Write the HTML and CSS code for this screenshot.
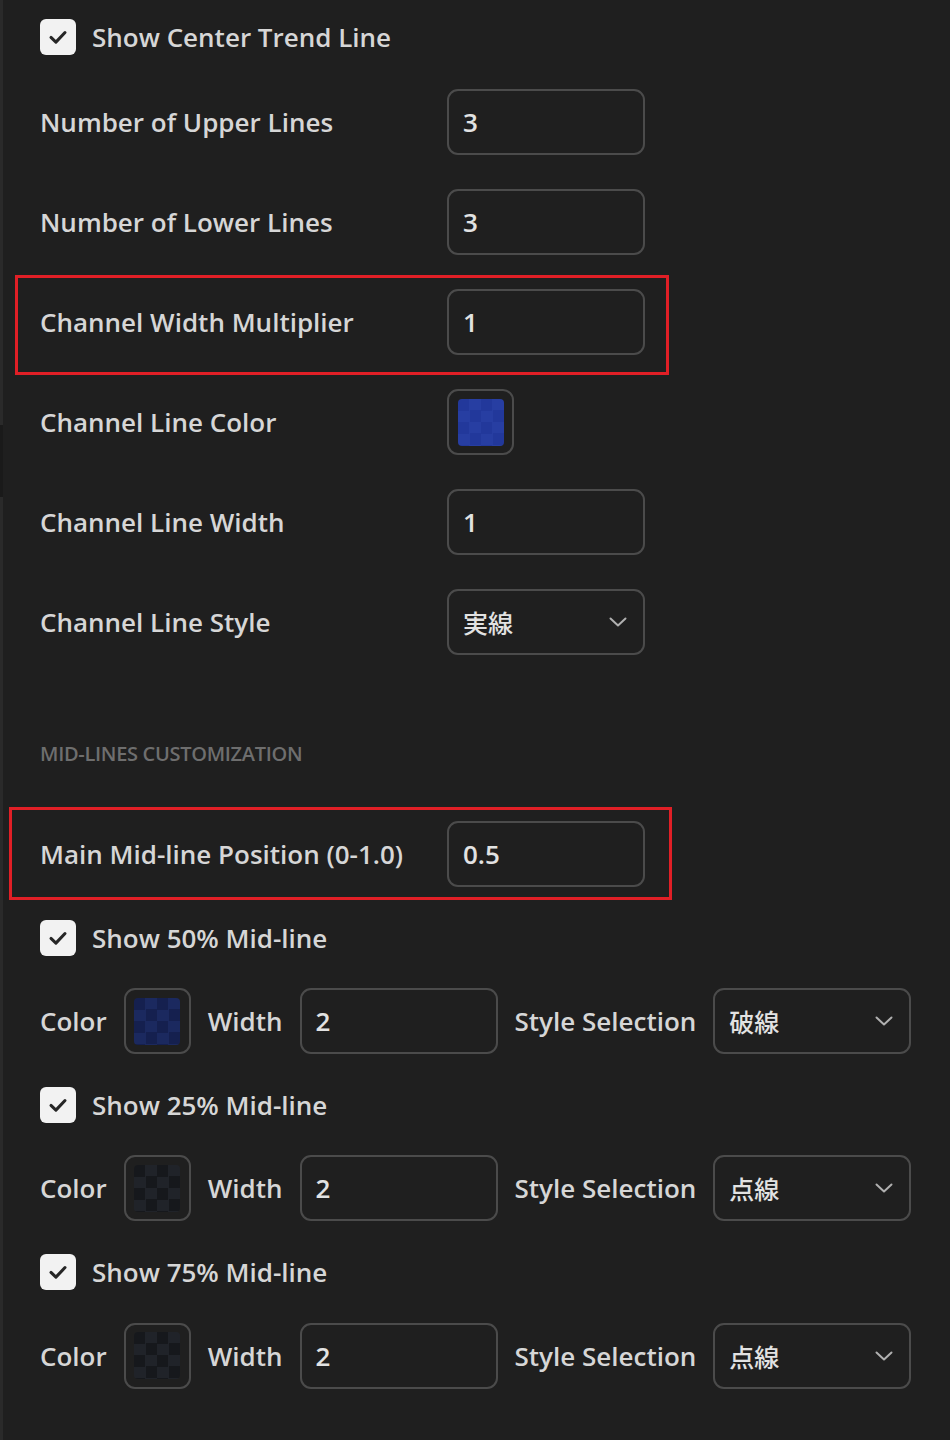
FILE: index.html
```html
<!DOCTYPE html>
<html lang="en">
<head>
<meta charset="utf-8">
<title>Channel settings</title>
<link rel="stylesheet" href="styles.css">
</head>
<body>
<div class="panel">
  <label class="check-row">
    <span class="checkbox"><svg viewBox="0 0 24 24"><path d="M6 12.4l4.2 4 7.8-8.2"/></svg></span>
    <span class="text">Show Center Trend Line</span>
  </label>

  <div class="field">
    <span class="label">Number of Upper Lines</span>
    <span class="input">3</span>
  </div>

  <div class="field">
    <span class="label">Number of Lower Lines</span>
    <span class="input">3</span>
  </div>

  <div class="field highlight hl-a">
    <span class="label">Channel Width Multiplier</span>
    <span class="input">1</span>
  </div>

  <div class="field">
    <span class="label">Channel Line Color</span>
    <span class="swatch"><span class="chip chip-blue"></span></span>
  </div>

  <div class="field">
    <span class="label">Channel Line Width</span>
    <span class="input">1</span>
  </div>

  <div class="field">
    <span class="label">Channel Line Style</span>
    <span class="input select"><span class="jp">実線</span><svg class="chev" viewBox="0 0 18 10"><path d="M1.5 1.5l7.5 7 7.5-7"/></svg></span>
  </div>

  <div class="section-title">MID-LINES CUSTOMIZATION</div>

  <div class="midlines">
    <div class="field highlight hl-b">
      <span class="label">Main Mid-line Position (0-1.0)</span>
      <span class="input">0.5</span>
    </div>

    <label class="check-row">
      <span class="checkbox"><svg viewBox="0 0 24 24"><path d="M6 12.4l4.2 4 7.8-8.2"/></svg></span>
      <span class="text">Show 50% Mid-line</span>
    </label>
    <div class="inline-row">
      <span class="label">Color</span>
      <span class="swatch"><span class="chip chip-navy"></span></span>
      <span class="label">Width</span>
      <span class="input">2</span>
      <span class="label">Style Selection</span>
      <span class="input select"><span class="jp">破線</span><svg class="chev" viewBox="0 0 18 10"><path d="M1.5 1.5l7.5 7 7.5-7"/></svg></span>
    </div>

    <label class="check-row">
      <span class="checkbox"><svg viewBox="0 0 24 24"><path d="M6 12.4l4.2 4 7.8-8.2"/></svg></span>
      <span class="text">Show 25% Mid-line</span>
    </label>
    <div class="inline-row">
      <span class="label">Color</span>
      <span class="swatch"><span class="chip chip-dark"></span></span>
      <span class="label">Width</span>
      <span class="input">2</span>
      <span class="label">Style Selection</span>
      <span class="input select"><span class="jp">点線</span><svg class="chev" viewBox="0 0 18 10"><path d="M1.5 1.5l7.5 7 7.5-7"/></svg></span>
    </div>

    <label class="check-row">
      <span class="checkbox"><svg viewBox="0 0 24 24"><path d="M6 12.4l4.2 4 7.8-8.2"/></svg></span>
      <span class="text">Show 75% Mid-line</span>
    </label>
    <div class="inline-row">
      <span class="label">Color</span>
      <span class="swatch"><span class="chip chip-dark"></span></span>
      <span class="label">Width</span>
      <span class="input">2</span>
      <span class="label">Style Selection</span>
      <span class="input select"><span class="jp">点線</span><svg class="chev" viewBox="0 0 18 10"><path d="M1.5 1.5l7.5 7 7.5-7"/></svg></span>
    </div>
  </div>
</div>
</body>
</html>
```

FILE: styles.css
```css
* {
  box-sizing: border-box;
}

html, body {
  margin: 0;
  height: 100%;
}

body {
  background:
    linear-gradient(#1a1a1a, #1a1a1a) 0 425px / 3px 72px no-repeat,
    linear-gradient(to right, #2a2a2a 3px, #1f1f1f 3px);
  color: #d6d6d6;
  font-family: "Open Sans", "Noto Sans CJK JP", sans-serif;
  font-size: 26px;
  font-weight: 600;
}

.panel {
  display: flex;
  flex-direction: column;
  gap: 34px;
  padding: 19px 0 0 40px;
  width: 950px;
}

.midlines {
  display: flex;
  flex-direction: column;
  gap: 32.6px;
}

/* checkbox rows */
.check-row {
  display: flex;
  align-items: center;
  gap: 16px;
  height: 36px;
}

.checkbox {
  flex: none;
  width: 36px;
  height: 36px;
  border-radius: 6px;
  background: #f2f2f2;
  display: flex;
  align-items: center;
  justify-content: center;
}

.checkbox svg {
  width: 28px;
  height: 28px;
}

.checkbox path {
  fill: none;
  stroke: #262626;
  stroke-width: 2.6;
  stroke-linecap: round;
  stroke-linejoin: round;
}

/* label + control rows */
.field {
  display: flex;
  align-items: center;
  height: 66px;
}

.field > .label {
  width: 407px;
}

.input {
  flex: none;
  display: flex;
  align-items: center;
  width: 198px;
  height: 66px;
  padding: 0 14px;
  border: 2px solid #4b4b4b;
  border-radius: 11px;
  color: #e2e2e2;
}

.select {
  justify-content: space-between;
  padding-right: 16px;
}

.jp {
  font-family: "Noto Sans CJK JP", sans-serif;
  font-size: 25px;
  font-weight: 500;
}

.chev {
  width: 18px;
  height: 10px;
}

.chev path {
  fill: none;
  stroke: #b0b0b0;
  stroke-width: 2;
  stroke-linecap: round;
  stroke-linejoin: round;
}

/* colour swatches */
.swatch {
  flex: none;
  display: flex;
  align-items: center;
  justify-content: center;
  width: 67px;
  height: 66px;
  border: 2px solid #4b4b4b;
  border-radius: 11px;
}

.chip {
  width: 46px;
  height: 47px;
  border-radius: 4px;
  background-size: 23px 23px;
}

.chip-blue {
  background-image:
    conic-gradient(#273ea2 25%, #22389b 0 50%, #273ea2 0 75%, #22389b 0);
}

.chip-navy {
  background-image:
    conic-gradient(#1b295f 25%, #15204f 0 50%, #1b295f 0 75%, #15204f 0);
}

.chip-dark {
  background-image:
    conic-gradient(#202329 25%, #16181c 0 50%, #202329 0 75%, #16181c 0);
}

/* section heading */
.section-title {
  margin: 53px 0 21px;
  height: 24px;
  line-height: 24px;
  font-size: 20px;
  font-weight: 600;
  color: #6e6e6e;
  letter-spacing: -0.3px;
}

/* red highlight frames */
.highlight {
  border: 3px solid #e01f26;
  height: auto;
}

.hl-a {
  width: 654px;
  margin: -14px 0 -20px -25px;
  padding: 11px 0 17px 22px;
}

.hl-b {
  width: 663px;
  margin: -14px 0 -13px -31px;
  padding: 11px 0 10px 28px;
}

/* mid-line style rows */
.inline-row {
  display: flex;
  align-items: center;
  gap: 17px;
  height: 66px;
}
```
